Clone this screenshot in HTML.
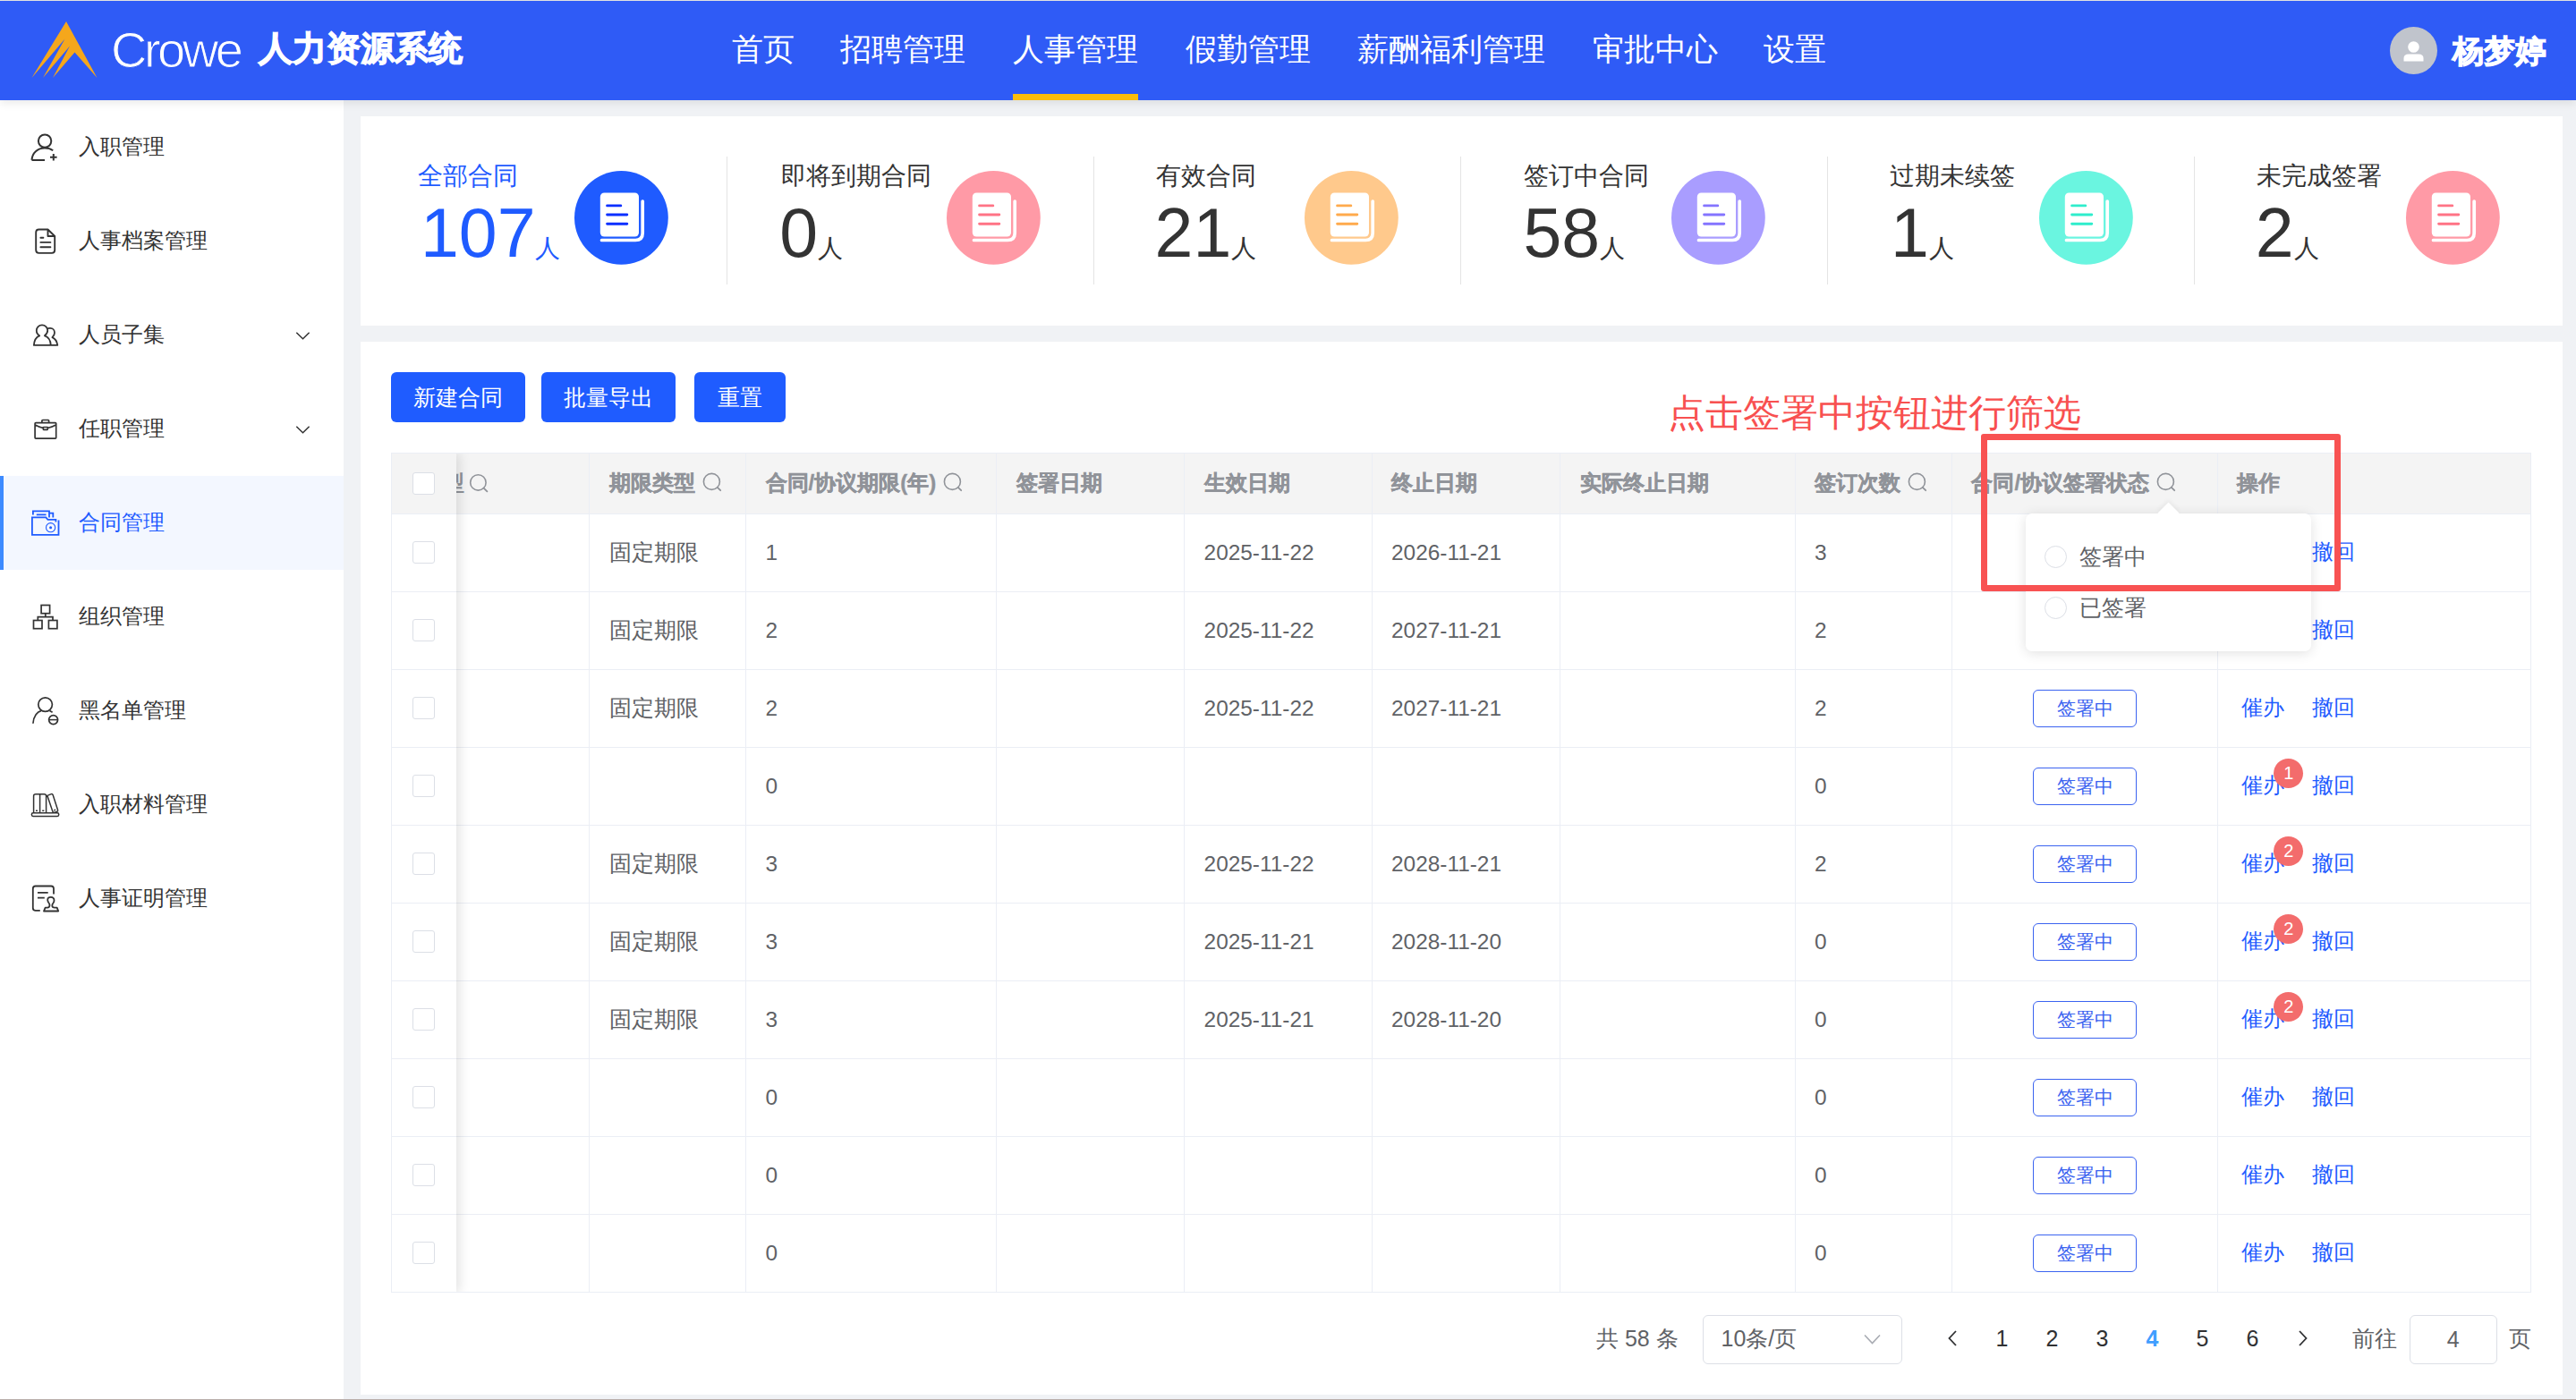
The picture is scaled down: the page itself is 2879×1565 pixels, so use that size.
<!DOCTYPE html>
<html><head><meta charset="utf-8"><title>Crowe 人力资源系统</title>
<style>
*{box-sizing:border-box;margin:0;padding:0}
html,body{width:2879px;height:1565px;overflow:hidden;background:#f0f2f5;font-family:"Liberation Sans",sans-serif;color:#333}
.ab{position:absolute}
.t{position:absolute;white-space:nowrap;line-height:1}
svg{position:absolute;overflow:visible}
</style></head><body>
<div class="ab" style="left:0;top:0;width:2879px;height:1565px;overflow:hidden">

<div class="ab" style="left:0;top:0;width:2879px;height:1px;background:#e6e6e6"></div>
<div class="ab" style="left:0;top:1px;width:2879px;height:111px;background:#2f5bf6;box-shadow:0 3px 10px rgba(0,0,0,.09);z-index:5">
<svg style="left:0;top:-1px" width="120" height="112" viewBox="0 0 120 112"><path d="M74,24 L108.5,87 L83.5,58.5 L59,87 L78,51.5 L48,87 L72.5,43.5 L35.5,87 Z" fill="#f5a71c"/></svg>
<div class="t" style="left:124px;top:27px;font-size:56px;letter-spacing:-3.5px;color:#fff;font-weight:normal;-webkit-text-stroke:1px #2f5bf6">Crowe</div>
<div class="t" style="left:289px;top:34px;font-size:38px;color:#fff;font-weight:bold;-webkit-text-stroke:1.2px #fff">人力资源系统</div>
<div class="t" style="left:818px;top:36px;font-size:35px;color:#fff">首页</div>
<div class="t" style="left:939px;top:36px;font-size:35px;color:#fff">招聘管理</div>
<div class="t" style="left:1132px;top:36px;font-size:35px;color:#fff">人事管理</div>
<div class="t" style="left:1325px;top:36px;font-size:35px;color:#fff">假勤管理</div>
<div class="t" style="left:1517px;top:36px;font-size:35px;color:#fff">薪酬福利管理</div>
<div class="t" style="left:1780px;top:36px;font-size:35px;color:#fff">审批中心</div>
<div class="t" style="left:1971px;top:36px;font-size:35px;color:#fff">设置</div>
<div class="ab" style="left:1132px;top:104px;width:140px;height:7px;background:#fbbd0b"></div>
<div class="ab" style="left:2671px;top:29px;width:53px;height:53px;border-radius:50%;background:#c0c4cc"></div>
<svg style="left:2671px;top:29px" width="53" height="53" viewBox="0 0 53 53"><circle cx="26.5" cy="22.5" r="6.3" fill="#fff"/><path d="M15.5,38.5 L15.5,35 Q15.5,30.5 21,30.5 L32,30.5 Q37.5,30.5 37.5,35 L37.5,38.5 Z" fill="#fff"/></svg>
<div class="t" style="left:2741px;top:38px;font-size:35px;color:#fff;font-weight:bold;-webkit-text-stroke:1px #fff">杨梦婷</div>
</div>
<div class="ab" style="left:0;top:112px;width:384px;height:1453px;background:#fff"></div>
<div class="ab" style="left:0;top:532px;width:384px;height:105px;background:#f3f7ff"></div>
<div class="ab" style="left:0;top:532px;width:4px;height:105px;background:#3d8bff"></div>
<svg style="left:25px;top:135.0px" width="60" height="60" viewBox="0 0 60 60"><circle cx="25.1" cy="22.6" r="7.2" fill="none" stroke="#333333" stroke-width="2"/><path d="M10.5,43.9 C11,36 17,30.5 25,30.5 C29,30.5 32,31.5 34.2,33.2 M10.5,43.9 L25,43.9 M34.8,37 L34.8,44.6 M31,40.8 L38.6,40.8" fill="none" stroke="#333333" stroke-width="2"/></svg>
<div class="t" style="left:88px;top:151.7px;font-size:24.3px;color:#333">入职管理</div>
<svg style="left:25px;top:240.0px" width="60" height="60" viewBox="0 0 60 60"><path d="M28.5,16.5 L18.5,16.5 Q15.2,16.5 15.2,19.8 L15.2,39.6 Q15.2,42.9 18.5,42.9 L32.9,42.9 Q36.2,42.9 36.2,39.6 L36.2,24 Z M28.5,16.5 L28.5,24 L36.2,24 M20.4,25.7 L23.4,25.7 M20.4,30.9 L31.4,30.9 M20.4,36.2 L31.4,36.2" fill="none" stroke="#333333" stroke-width="1.9" stroke-linejoin="round" stroke-linecap="round"/></svg>
<div class="t" style="left:88px;top:256.7px;font-size:24.3px;color:#333">人事档案管理</div>
<svg style="left:25px;top:345.0px" width="60" height="60" viewBox="0 0 60 60"><path d="M19.2,30.3 C16,28.5 15.8,25.5 15.8,24.6 C15.8,21 18.6,18.4 22,18.4 C25.4,18.4 28.2,21 28.2,24.6 C28.2,26.5 27,28.6 24.9,30.3 C29,31.5 31.5,36 31.8,40.9 L12.9,40.9 C13.2,36 15.5,31.7 19.2,30.3 Z M27.8,22.4 C28.8,21.6 30,21.8 31.3,21.8 C34,21.8 36,24 36,26.9 C36,29 34.8,30.8 33.4,32.2 C36.8,33.6 38.7,37 39.3,40.9 L31.8,40.9" fill="none" stroke="#333333" stroke-width="1.8" stroke-linejoin="round"/></svg>
<div class="t" style="left:88px;top:361.7px;font-size:24.3px;color:#333">人员子集</div>
<svg style="left:330px;top:366.5px" width="18" height="14" viewBox="0 0 18 14"><path d="M1.3,4.8 L8.5,11.8 L15.6,4.8" fill="none" stroke="#333" stroke-width="1.5"/></svg>
<svg style="left:25px;top:450.0px" width="60" height="60" viewBox="0 0 60 60"><path d="M15.2,22.6 L36.8,22.6 Q37.7,22.6 37.7,23.5 L37.7,39.2 Q37.7,40.1 36.8,40.1 L15,40.1 Q14.1,40.1 14.1,39.2 L14.1,23.5 Q14.1,22.6 15,22.6 Z M21.9,22.5 L21.9,20.3 Q21.9,19.5 22.7,19.5 L28.8,19.5 Q29.6,19.5 29.6,20.3 L29.6,22.5 M14.3,25 C17,26.5 20,27.8 23.3,28.5 M28.2,28.5 C31.5,27.8 34.8,26.5 37.5,25 M23.8,27.5 L27.8,27.5 Q28.3,27.5 28.3,28 L28.3,29.8 Q28.3,30.4 27.8,30.4 L23.8,30.4 Q23.3,30.4 23.3,29.8 L23.3,28 Q23.3,27.5 23.8,27.5 Z" fill="none" stroke="#333333" stroke-width="1.7" stroke-linejoin="round"/></svg>
<div class="t" style="left:88px;top:466.7px;font-size:24.3px;color:#333">任职管理</div>
<svg style="left:330px;top:471.5px" width="18" height="14" viewBox="0 0 18 14"><path d="M1.3,4.8 L8.5,11.8 L15.6,4.8" fill="none" stroke="#333" stroke-width="1.5"/></svg>
<svg style="left:25px;top:555.0px" width="60" height="60" viewBox="0 0 60 60"><path d="M11.9,20.5 L11.9,16.4 L30,16.4 L30,23.4 M30,18.6 L34.3,18.6 L34.3,23.4 M15.8,20.3 L26.5,20.3 M37.4,28.6 L37.4,25.9 L28.5,25.9 L26.3,23.4 L10.9,23.4 L10.9,42.9 L40.5,42.9 L40.5,26.5" fill="none" stroke="#1f5cff" stroke-width="1.8"/><circle cx="31.6" cy="34.7" r="5.1" fill="none" stroke="#1f5cff" stroke-width="1.1"/><circle cx="31.6" cy="34.7" r="1.5" fill="#1f5cff"/></svg>
<div class="t" style="left:88px;top:571.7px;font-size:24.3px;color:#1f5cff">合同管理</div>
<svg style="left:25px;top:660.0px" width="60" height="60" viewBox="0 0 60 60"><rect x="21.1" y="16.5" width="9.5" height="9.2" fill="none" stroke="#333333" stroke-width="1.7"/><rect x="12.5" y="33.5" width="9.5" height="9.2" fill="none" stroke="#333333" stroke-width="1.7"/><rect x="29.4" y="33.5" width="9.5" height="9.2" fill="none" stroke="#333333" stroke-width="1.7"/><path d="M25.8,25.7 L25.8,29.6 M17.3,33.5 L17.3,29.6 L34,29.6 L34,33.5" fill="none" stroke="#333333" stroke-width="1.7"/></svg>
<div class="t" style="left:88px;top:676.7px;font-size:24.3px;color:#333">组织管理</div>
<svg style="left:25px;top:765.0px" width="60" height="60" viewBox="0 0 60 60"><circle cx="25.6" cy="22.6" r="7.8" fill="none" stroke="#333333" stroke-width="1.7"/><path d="M11.9,43.8 C12.5,35 17,30.5 21,29.6 M30.5,29.5 L33.6,31.3" fill="none" stroke="#333333" stroke-width="1.7"/><circle cx="34.6" cy="39.6" r="5" fill="none" stroke="#333333" stroke-width="1.7"/><path d="M30,39.6 L39.2,39.6" stroke="#333333" stroke-width="1.5"/></svg>
<div class="t" style="left:88px;top:781.7px;font-size:24.3px;color:#333">黑名单管理</div>
<svg style="left:25px;top:870.0px" width="60" height="60" viewBox="0 0 60 60"><rect x="10.4" y="38.7" width="30.3" height="3.7" rx="1.6" fill="none" stroke="#333333" stroke-width="1.5"/><path d="M12.6,38.7 L12.6,19.8 Q12.6,17.7 15,17.7 L24.3,17.7 Q26.6,17.7 26.6,19.8 L26.6,38.7 M19.6,17.7 L19.6,38.7 M27.9,19.4 L32.3,17.6 Q33.6,17.2 34.1,18.6 L39.6,35.4 Q40,37 38.4,37.5 L35.8,38.3 Q34.4,38.6 33.9,37.2 Z M15,36.3 L17,36.3 M22.2,36.3 L24.3,36.3 M35.2,35.9 L37.2,35.3" fill="none" stroke="#333333" stroke-width="1.5" stroke-linejoin="round"/></svg>
<div class="t" style="left:88px;top:886.7px;font-size:24.3px;color:#333">入职材料管理</div>
<svg style="left:25px;top:975.0px" width="60" height="60" viewBox="0 0 60 60"><path d="M19.8,42.9 L14.7,42.9 Q11.8,42.9 11.8,40 L11.8,18.5 Q11.8,15.5 14.7,15.5 L32.1,15.5 Q35,15.5 35,18.5 L35,24.5 M17,22.8 L28.7,22.8 M17,28.6 L24.8,28.6 M24,43.5 L25.6,39.6 L28,39.6 Q30.5,39.6 30.5,36.8 Q30.5,35.5 29,33.5 Q28.2,32 28.2,31 Q28.2,27.9 31.8,27.9 Q35.5,27.9 35.5,31.5 Q35.5,33 34.6,34.3 Q33.3,36 33.3,37.2 Q33.3,39.6 36.3,39.6 L38.7,39.6 L40.2,43.5 Z" fill="none" stroke="#333333" stroke-width="1.8" stroke-linejoin="round"/></svg>
<div class="t" style="left:88px;top:991.7px;font-size:24.3px;color:#333">人事证明管理</div>
<div class="ab" style="left:403px;top:130px;width:2461px;height:234px;background:#fff"></div>
<div class="t" style="left:467px;top:183px;font-size:27.5px;color:#1f5bff">全部合同</div>
<div class="t" style="left:470px;top:222px;font-size:77px;color:#1f5bff"><span>107</span><span style="font-size:27.5px;margin-left:0px">人</span></div>
<svg style="left:642.0px;top:191px" width="105" height="105" viewBox="0 0 105 105"><circle cx="52.4" cy="52.4" r="52.4" fill="#1f5bff"/><rect x="28.8" y="24.5" width="43.2" height="49" rx="4.5" fill="#fff"/><path d="M36.6,38.9 L51.8,38.9 M36.6,49 L58.8,49 M36.6,59.3 L58.8,59.3" stroke="#0b2fff" stroke-width="2.9" stroke-linecap="round"/><path d="M76.2,34 L76.2,69.5 Q76.2,77.5 68.2,77.5 L30.5,77.5" fill="none" stroke="#fff" stroke-width="3.7" stroke-linecap="round"/></svg>
<div class="t" style="left:872.6px;top:183px;font-size:27.5px;color:#333">即将到期合同</div>
<div class="t" style="left:871.3px;top:222px;font-size:77px;color:#333"><span>0</span><span style="font-size:27.5px;margin-left:0px">人</span></div>
<svg style="left:1058.2px;top:191px" width="105" height="105" viewBox="0 0 105 105"><circle cx="52.4" cy="52.4" r="52.4" fill="#ff9aa6"/><rect x="28.8" y="24.5" width="43.2" height="49" rx="4.5" fill="#fff"/><path d="M36.6,38.9 L51.8,38.9 M36.6,49 L58.8,49 M36.6,59.3 L58.8,59.3" stroke="#ff7385" stroke-width="2.9" stroke-linecap="round"/><path d="M76.2,34 L76.2,69.5 Q76.2,77.5 68.2,77.5 L30.5,77.5" fill="none" stroke="#fff" stroke-width="3.7" stroke-linecap="round"/></svg>
<div class="t" style="left:1292px;top:183px;font-size:27.5px;color:#333">有效合同</div>
<div class="t" style="left:1290.6px;top:222px;font-size:77px;color:#333"><span>21</span><span style="font-size:27.5px;margin-left:0px">人</span></div>
<svg style="left:1458.3px;top:191px" width="105" height="105" viewBox="0 0 105 105"><circle cx="52.4" cy="52.4" r="52.4" fill="#ffc98c"/><rect x="28.8" y="24.5" width="43.2" height="49" rx="4.5" fill="#fff"/><path d="M36.6,38.9 L51.8,38.9 M36.6,49 L58.8,49 M36.6,59.3 L58.8,59.3" stroke="#ffaa4c" stroke-width="2.9" stroke-linecap="round"/><path d="M76.2,34 L76.2,69.5 Q76.2,77.5 68.2,77.5 L30.5,77.5" fill="none" stroke="#fff" stroke-width="3.7" stroke-linecap="round"/></svg>
<div class="t" style="left:1702.8px;top:183px;font-size:27.5px;color:#333">签订中合同</div>
<div class="t" style="left:1702.4px;top:222px;font-size:77px;color:#333"><span>58</span><span style="font-size:27.5px;margin-left:0px">人</span></div>
<svg style="left:1868.2px;top:191px" width="105" height="105" viewBox="0 0 105 105"><circle cx="52.4" cy="52.4" r="52.4" fill="#a99dff"/><rect x="28.8" y="24.5" width="43.2" height="49" rx="4.5" fill="#fff"/><path d="M36.6,38.9 L51.8,38.9 M36.6,49 L58.8,49 M36.6,59.3 L58.8,59.3" stroke="#8474ff" stroke-width="2.9" stroke-linecap="round"/><path d="M76.2,34 L76.2,69.5 Q76.2,77.5 68.2,77.5 L30.5,77.5" fill="none" stroke="#fff" stroke-width="3.7" stroke-linecap="round"/></svg>
<div class="t" style="left:2112.4px;top:183px;font-size:27.5px;color:#333">过期未续签</div>
<div class="t" style="left:2113px;top:222px;font-size:77px;color:#333"><span>1</span><span style="font-size:27.5px;margin-left:0px">人</span></div>
<svg style="left:2279.2px;top:191px" width="105" height="105" viewBox="0 0 105 105"><circle cx="52.4" cy="52.4" r="52.4" fill="#6af5e0"/><rect x="28.8" y="24.5" width="43.2" height="49" rx="4.5" fill="#fff"/><path d="M36.6,38.9 L51.8,38.9 M36.6,49 L58.8,49 M36.6,59.3 L58.8,59.3" stroke="#2eedcc" stroke-width="2.9" stroke-linecap="round"/><path d="M76.2,34 L76.2,69.5 Q76.2,77.5 68.2,77.5 L30.5,77.5" fill="none" stroke="#fff" stroke-width="3.7" stroke-linecap="round"/></svg>
<div class="t" style="left:2522px;top:183px;font-size:27.5px;color:#333">未完成签署</div>
<div class="t" style="left:2520.7px;top:222px;font-size:77px;color:#333"><span>2</span><span style="font-size:27.5px;margin-left:0px">人</span></div>
<svg style="left:2688.6px;top:191px" width="105" height="105" viewBox="0 0 105 105"><circle cx="52.4" cy="52.4" r="52.4" fill="#ff9aa6"/><rect x="28.8" y="24.5" width="43.2" height="49" rx="4.5" fill="#fff"/><path d="M36.6,38.9 L51.8,38.9 M36.6,49 L58.8,49 M36.6,59.3 L58.8,59.3" stroke="#ff7385" stroke-width="2.9" stroke-linecap="round"/><path d="M76.2,34 L76.2,69.5 Q76.2,77.5 68.2,77.5 L30.5,77.5" fill="none" stroke="#fff" stroke-width="3.7" stroke-linecap="round"/></svg>
<div class="ab" style="left:812px;top:175px;width:1px;height:143px;background:#e4e4e4"></div>
<div class="ab" style="left:1222px;top:175px;width:1px;height:143px;background:#e4e4e4"></div>
<div class="ab" style="left:1632px;top:175px;width:1px;height:143px;background:#e4e4e4"></div>
<div class="ab" style="left:2042px;top:175px;width:1px;height:143px;background:#e4e4e4"></div>
<div class="ab" style="left:2452px;top:175px;width:1px;height:143px;background:#e4e4e4"></div>
<div class="ab" style="left:403px;top:382px;width:2461px;height:1177px;background:#fff"></div>
<div class="ab" style="left:437px;top:416px;width:150px;height:56px;border-radius:6px;background:#1f5cff;color:#fff;font-size:25px;line-height:56px;text-align:center">新建合同</div>
<div class="ab" style="left:605px;top:416px;width:150px;height:56px;border-radius:6px;background:#1f5cff;color:#fff;font-size:25px;line-height:56px;text-align:center">批量导出</div>
<div class="ab" style="left:776px;top:416px;width:102px;height:56px;border-radius:6px;background:#1f5cff;color:#fff;font-size:25px;line-height:56px;text-align:center">重置</div>
<div class="t" style="left:1863.5px;top:441px;font-size:42.2px;color:#f85050">点击签署中按钮进行筛选</div>
<div class="ab" style="left:437px;top:506px;width:2392px;height:939px;border:1px solid #ebeef5;background:#fff;overflow:hidden">
<div class="ab" style="left:0;top:0;width:2391px;height:67px;background:#f4f4f4"></div>
<div class="ab" style="left:0;top:67px;width:2391px;height:1px;background:#ebeef5"></div>
<div class="ab" style="left:0;top:154px;width:2391px;height:1px;background:#ebeef5"></div>
<div class="ab" style="left:0;top:241px;width:2391px;height:1px;background:#ebeef5"></div>
<div class="ab" style="left:0;top:328px;width:2391px;height:1px;background:#ebeef5"></div>
<div class="ab" style="left:0;top:415px;width:2391px;height:1px;background:#ebeef5"></div>
<div class="ab" style="left:0;top:502px;width:2391px;height:1px;background:#ebeef5"></div>
<div class="ab" style="left:0;top:589px;width:2391px;height:1px;background:#ebeef5"></div>
<div class="ab" style="left:0;top:676px;width:2391px;height:1px;background:#ebeef5"></div>
<div class="ab" style="left:0;top:763px;width:2391px;height:1px;background:#ebeef5"></div>
<div class="ab" style="left:0;top:850px;width:2391px;height:1px;background:#ebeef5"></div>
<div class="ab" style="left:220px;top:0;width:1px;height:938px;background:#ebeef5"></div>
<div class="ab" style="left:395px;top:0;width:1px;height:938px;background:#ebeef5"></div>
<div class="ab" style="left:675px;top:0;width:1px;height:938px;background:#ebeef5"></div>
<div class="ab" style="left:885px;top:0;width:1px;height:938px;background:#ebeef5"></div>
<div class="ab" style="left:1095px;top:0;width:1px;height:938px;background:#ebeef5"></div>
<div class="ab" style="left:1305px;top:0;width:1px;height:938px;background:#ebeef5"></div>
<div class="ab" style="left:1568px;top:0;width:1px;height:938px;background:#ebeef5"></div>
<div class="ab" style="left:1743px;top:0;width:1px;height:938px;background:#ebeef5"></div>
<div class="ab" style="left:2040px;top:0;width:1px;height:938px;background:#ebeef5"></div>
<div class="t hd" style="left:243.0px;top:21px;font-size:24px;font-weight:bold;color:#909399;-webkit-text-stroke:0.4px #909399"><span>期限类型</span><svg class="il" width="24" height="24" viewBox="0 0 24 24" style="position:relative;display:inline-block;vertical-align:top;margin-left:8px;top:0px"><circle cx="10.4" cy="10.4" r="9" fill="none" stroke="#909399" stroke-width="1.6"/><path d="M16.8,16.8 L20.2,20.2" stroke="#909399" stroke-width="1.8" stroke-linecap="round"/></svg></div>
<div class="t hd" style="left:417.6px;top:21px;font-size:24px;font-weight:bold;color:#909399;-webkit-text-stroke:0.4px #909399"><span>合同/协议期限(年)</span><svg class="il" width="24" height="24" viewBox="0 0 24 24" style="position:relative;display:inline-block;vertical-align:top;margin-left:8px;top:0px"><circle cx="10.4" cy="10.4" r="9" fill="none" stroke="#909399" stroke-width="1.6"/><path d="M16.8,16.8 L20.2,20.2" stroke="#909399" stroke-width="1.8" stroke-linecap="round"/></svg></div>
<div class="t hd" style="left:698.0px;top:21px;font-size:24px;font-weight:bold;color:#909399;-webkit-text-stroke:0.4px #909399"><span>签署日期</span></div>
<div class="t hd" style="left:907.6px;top:21px;font-size:24px;font-weight:bold;color:#909399;-webkit-text-stroke:0.4px #909399"><span>生效日期</span></div>
<div class="t hd" style="left:1117.0px;top:21px;font-size:24px;font-weight:bold;color:#909399;-webkit-text-stroke:0.4px #909399"><span>终止日期</span></div>
<div class="t hd" style="left:1327.6px;top:21px;font-size:24px;font-weight:bold;color:#909399;-webkit-text-stroke:0.4px #909399"><span>实际终止日期</span></div>
<div class="t hd" style="left:1590.0px;top:21px;font-size:24px;font-weight:bold;color:#909399;-webkit-text-stroke:0.4px #909399"><span>签订次数</span><svg class="il" width="24" height="24" viewBox="0 0 24 24" style="position:relative;display:inline-block;vertical-align:top;margin-left:8px;top:0px"><circle cx="10.4" cy="10.4" r="9" fill="none" stroke="#909399" stroke-width="1.6"/><path d="M16.8,16.8 L20.2,20.2" stroke="#909399" stroke-width="1.8" stroke-linecap="round"/></svg></div>
<div class="t hd" style="left:1765.4px;top:21px;font-size:24px;font-weight:bold;color:#909399;-webkit-text-stroke:0.4px #909399"><span>合同/协议签署状态</span><svg class="il" width="24" height="24" viewBox="0 0 24 24" style="position:relative;display:inline-block;vertical-align:top;margin-left:8px;top:0px"><circle cx="10.4" cy="10.4" r="9" fill="none" stroke="#909399" stroke-width="1.6"/><path d="M16.8,16.8 L20.2,20.2" stroke="#909399" stroke-width="1.8" stroke-linecap="round"/></svg></div>
<div class="t hd" style="left:2062.0px;top:21px;font-size:24px;font-weight:bold;color:#909399;-webkit-text-stroke:0.4px #909399"><span>操作</span></div>
<div class="ab" style="left:72px;top:0;width:20px;height:68px;overflow:hidden"><div class="t" style="left:-15px;top:21px;font-size:24px;font-weight:bold;color:#909399">型</div></div>
<svg style="left:87.0px;top:22.0px" width="24" height="24" viewBox="0 0 24 24"><circle cx="9.4" cy="10.4" r="8.7" fill="none" stroke="#909399" stroke-width="1.6"/><path d="M15.6,16.6 L19.4,20.4" stroke="#909399" stroke-width="1.8" stroke-linecap="round"/></svg>
<div class="t" style="left:242.5px;top:98.0px;font-size:25px;color:#606266">固定期限</div>
<div class="t" style="left:417.6px;top:98.5px;font-size:24.4px;color:#606266">1</div>
<div class="t" style="left:907.6px;top:98.5px;font-size:24.4px;color:#606266">2025-11-22</div>
<div class="t" style="left:1117.0px;top:98.5px;font-size:24.4px;color:#606266">2026-11-21</div>
<div class="t" style="left:1590.0px;top:98.5px;font-size:24.4px;color:#606266">3</div>
<div class="ab" style="left:1834px;top:89.5px;width:116px;height:42px;border:1.5px solid #3b63f0;border-radius:6px;color:#3b63f0;font-size:20.5px;line-height:39px;text-align:center">签署中</div>
<div class="t" style="left:2067px;top:98.0px;font-size:24px;color:#1f5cff">催办</div>
<div class="t" style="left:2146px;top:98.0px;font-size:24px;color:#1f5cff">撤回</div>
<div class="t" style="left:242.5px;top:185.0px;font-size:25px;color:#606266">固定期限</div>
<div class="t" style="left:417.6px;top:185.5px;font-size:24.4px;color:#606266">2</div>
<div class="t" style="left:907.6px;top:185.5px;font-size:24.4px;color:#606266">2025-11-22</div>
<div class="t" style="left:1117.0px;top:185.5px;font-size:24.4px;color:#606266">2027-11-21</div>
<div class="t" style="left:1590.0px;top:185.5px;font-size:24.4px;color:#606266">2</div>
<div class="ab" style="left:1834px;top:176.5px;width:116px;height:42px;border:1.5px solid #3b63f0;border-radius:6px;color:#3b63f0;font-size:20.5px;line-height:39px;text-align:center">签署中</div>
<div class="t" style="left:2067px;top:185.0px;font-size:24px;color:#1f5cff">催办</div>
<div class="t" style="left:2146px;top:185.0px;font-size:24px;color:#1f5cff">撤回</div>
<div class="t" style="left:242.5px;top:272.0px;font-size:25px;color:#606266">固定期限</div>
<div class="t" style="left:417.6px;top:272.5px;font-size:24.4px;color:#606266">2</div>
<div class="t" style="left:907.6px;top:272.5px;font-size:24.4px;color:#606266">2025-11-22</div>
<div class="t" style="left:1117.0px;top:272.5px;font-size:24.4px;color:#606266">2027-11-21</div>
<div class="t" style="left:1590.0px;top:272.5px;font-size:24.4px;color:#606266">2</div>
<div class="ab" style="left:1834px;top:263.5px;width:116px;height:42px;border:1.5px solid #3b63f0;border-radius:6px;color:#3b63f0;font-size:20.5px;line-height:39px;text-align:center">签署中</div>
<div class="t" style="left:2067px;top:272.0px;font-size:24px;color:#1f5cff">催办</div>
<div class="t" style="left:2146px;top:272.0px;font-size:24px;color:#1f5cff">撤回</div>
<div class="t" style="left:417.6px;top:359.5px;font-size:24.4px;color:#606266">0</div>
<div class="t" style="left:1590.0px;top:359.5px;font-size:24.4px;color:#606266">0</div>
<div class="ab" style="left:1834px;top:350.5px;width:116px;height:42px;border:1.5px solid #3b63f0;border-radius:6px;color:#3b63f0;font-size:20.5px;line-height:39px;text-align:center">签署中</div>
<div class="t" style="left:2067px;top:359.0px;font-size:24px;color:#1f5cff">催办</div>
<div class="t" style="left:2146px;top:359.0px;font-size:24px;color:#1f5cff">撤回</div>
<div class="ab" style="left:2103.2px;top:341.0px;width:33px;height:33px;border-radius:50%;background:#f36c6c;color:#fff;font-size:20px;line-height:33px;text-align:center">1</div>
<div class="t" style="left:242.5px;top:446.0px;font-size:25px;color:#606266">固定期限</div>
<div class="t" style="left:417.6px;top:446.5px;font-size:24.4px;color:#606266">3</div>
<div class="t" style="left:907.6px;top:446.5px;font-size:24.4px;color:#606266">2025-11-22</div>
<div class="t" style="left:1117.0px;top:446.5px;font-size:24.4px;color:#606266">2028-11-21</div>
<div class="t" style="left:1590.0px;top:446.5px;font-size:24.4px;color:#606266">2</div>
<div class="ab" style="left:1834px;top:437.5px;width:116px;height:42px;border:1.5px solid #3b63f0;border-radius:6px;color:#3b63f0;font-size:20.5px;line-height:39px;text-align:center">签署中</div>
<div class="t" style="left:2067px;top:446.0px;font-size:24px;color:#1f5cff">催办</div>
<div class="t" style="left:2146px;top:446.0px;font-size:24px;color:#1f5cff">撤回</div>
<div class="ab" style="left:2103.2px;top:428.0px;width:33px;height:33px;border-radius:50%;background:#f36c6c;color:#fff;font-size:20px;line-height:33px;text-align:center">2</div>
<div class="t" style="left:242.5px;top:533.0px;font-size:25px;color:#606266">固定期限</div>
<div class="t" style="left:417.6px;top:533.5px;font-size:24.4px;color:#606266">3</div>
<div class="t" style="left:907.6px;top:533.5px;font-size:24.4px;color:#606266">2025-11-21</div>
<div class="t" style="left:1117.0px;top:533.5px;font-size:24.4px;color:#606266">2028-11-20</div>
<div class="t" style="left:1590.0px;top:533.5px;font-size:24.4px;color:#606266">0</div>
<div class="ab" style="left:1834px;top:524.5px;width:116px;height:42px;border:1.5px solid #3b63f0;border-radius:6px;color:#3b63f0;font-size:20.5px;line-height:39px;text-align:center">签署中</div>
<div class="t" style="left:2067px;top:533.0px;font-size:24px;color:#1f5cff">催办</div>
<div class="t" style="left:2146px;top:533.0px;font-size:24px;color:#1f5cff">撤回</div>
<div class="ab" style="left:2103.2px;top:515.0px;width:33px;height:33px;border-radius:50%;background:#f36c6c;color:#fff;font-size:20px;line-height:33px;text-align:center">2</div>
<div class="t" style="left:242.5px;top:620.0px;font-size:25px;color:#606266">固定期限</div>
<div class="t" style="left:417.6px;top:620.5px;font-size:24.4px;color:#606266">3</div>
<div class="t" style="left:907.6px;top:620.5px;font-size:24.4px;color:#606266">2025-11-21</div>
<div class="t" style="left:1117.0px;top:620.5px;font-size:24.4px;color:#606266">2028-11-20</div>
<div class="t" style="left:1590.0px;top:620.5px;font-size:24.4px;color:#606266">0</div>
<div class="ab" style="left:1834px;top:611.5px;width:116px;height:42px;border:1.5px solid #3b63f0;border-radius:6px;color:#3b63f0;font-size:20.5px;line-height:39px;text-align:center">签署中</div>
<div class="t" style="left:2067px;top:620.0px;font-size:24px;color:#1f5cff">催办</div>
<div class="t" style="left:2146px;top:620.0px;font-size:24px;color:#1f5cff">撤回</div>
<div class="ab" style="left:2103.2px;top:602.0px;width:33px;height:33px;border-radius:50%;background:#f36c6c;color:#fff;font-size:20px;line-height:33px;text-align:center">2</div>
<div class="t" style="left:417.6px;top:707.5px;font-size:24.4px;color:#606266">0</div>
<div class="t" style="left:1590.0px;top:707.5px;font-size:24.4px;color:#606266">0</div>
<div class="ab" style="left:1834px;top:698.5px;width:116px;height:42px;border:1.5px solid #3b63f0;border-radius:6px;color:#3b63f0;font-size:20.5px;line-height:39px;text-align:center">签署中</div>
<div class="t" style="left:2067px;top:707.0px;font-size:24px;color:#1f5cff">催办</div>
<div class="t" style="left:2146px;top:707.0px;font-size:24px;color:#1f5cff">撤回</div>
<div class="t" style="left:417.6px;top:794.5px;font-size:24.4px;color:#606266">0</div>
<div class="t" style="left:1590.0px;top:794.5px;font-size:24.4px;color:#606266">0</div>
<div class="ab" style="left:1834px;top:785.5px;width:116px;height:42px;border:1.5px solid #3b63f0;border-radius:6px;color:#3b63f0;font-size:20.5px;line-height:39px;text-align:center">签署中</div>
<div class="t" style="left:2067px;top:794.0px;font-size:24px;color:#1f5cff">催办</div>
<div class="t" style="left:2146px;top:794.0px;font-size:24px;color:#1f5cff">撤回</div>
<div class="t" style="left:417.6px;top:881.5px;font-size:24.4px;color:#606266">0</div>
<div class="t" style="left:1590.0px;top:881.5px;font-size:24.4px;color:#606266">0</div>
<div class="ab" style="left:1834px;top:872.5px;width:116px;height:42px;border:1.5px solid #3b63f0;border-radius:6px;color:#3b63f0;font-size:20.5px;line-height:39px;text-align:center">签署中</div>
<div class="t" style="left:2067px;top:881.0px;font-size:24px;color:#1f5cff">催办</div>
<div class="t" style="left:2146px;top:881.0px;font-size:24px;color:#1f5cff">撤回</div>
<div class="ab" style="left:0;top:0;width:72px;height:938px;background:#fff;box-shadow:4px 0 12px rgba(0,0,0,.11)">
<div class="ab" style="left:0;top:0;width:100%;height:67px;background:#f4f4f4"></div>
<div class="ab" style="left:0;top:67px;width:100%;height:1px;background:#ebeef5"></div>
<div class="ab" style="left:0;top:154px;width:100%;height:1px;background:#ebeef5"></div>
<div class="ab" style="left:0;top:241px;width:100%;height:1px;background:#ebeef5"></div>
<div class="ab" style="left:0;top:328px;width:100%;height:1px;background:#ebeef5"></div>
<div class="ab" style="left:0;top:415px;width:100%;height:1px;background:#ebeef5"></div>
<div class="ab" style="left:0;top:502px;width:100%;height:1px;background:#ebeef5"></div>
<div class="ab" style="left:0;top:589px;width:100%;height:1px;background:#ebeef5"></div>
<div class="ab" style="left:0;top:676px;width:100%;height:1px;background:#ebeef5"></div>
<div class="ab" style="left:0;top:763px;width:100%;height:1px;background:#ebeef5"></div>
<div class="ab" style="left:0;top:850px;width:100%;height:1px;background:#ebeef5"></div>
<div class="ab" style="left:23px;top:20.5px;width:25px;height:25px;border:1px solid #dcdfe6;border-radius:3px;background:#fff"></div>
<div class="ab" style="left:23px;top:98.0px;width:25px;height:25px;border:1px solid #dcdfe6;border-radius:3px;background:#fff"></div>
<div class="ab" style="left:23px;top:185.0px;width:25px;height:25px;border:1px solid #dcdfe6;border-radius:3px;background:#fff"></div>
<div class="ab" style="left:23px;top:272.0px;width:25px;height:25px;border:1px solid #dcdfe6;border-radius:3px;background:#fff"></div>
<div class="ab" style="left:23px;top:359.0px;width:25px;height:25px;border:1px solid #dcdfe6;border-radius:3px;background:#fff"></div>
<div class="ab" style="left:23px;top:446.0px;width:25px;height:25px;border:1px solid #dcdfe6;border-radius:3px;background:#fff"></div>
<div class="ab" style="left:23px;top:533.0px;width:25px;height:25px;border:1px solid #dcdfe6;border-radius:3px;background:#fff"></div>
<div class="ab" style="left:23px;top:620.0px;width:25px;height:25px;border:1px solid #dcdfe6;border-radius:3px;background:#fff"></div>
<div class="ab" style="left:23px;top:707.0px;width:25px;height:25px;border:1px solid #dcdfe6;border-radius:3px;background:#fff"></div>
<div class="ab" style="left:23px;top:794.0px;width:25px;height:25px;border:1px solid #dcdfe6;border-radius:3px;background:#fff"></div>
<div class="ab" style="left:23px;top:881.0px;width:25px;height:25px;border:1px solid #dcdfe6;border-radius:3px;background:#fff"></div>
</div>
</div>
<div class="ab" style="left:2264px;top:574px;width:319px;height:154px;background:#fff;border-radius:7px;box-shadow:0 2px 14px rgba(0,0,0,.12);z-index:8"></div>
<div class="ab" style="left:2414.5px;top:565px;width:17px;height:17px;background:#fff;transform:rotate(45deg);box-shadow:-2px -2px 5px rgba(0,0,0,.05);z-index:8"></div>
<div class="ab" style="left:2402px;top:574px;width:42px;height:14px;background:#fff;z-index:9"></div>
<div class="ab" style="left:2284.5px;top:609.9px;width:25px;height:25px;border:1px solid #dcdfe6;border-radius:50%;background:#fff;z-index:9"></div>
<div class="t" style="left:2324px;top:609.9px;font-size:25px;color:#606266;z-index:9">签署中</div>
<div class="ab" style="left:2284.5px;top:666.5px;width:25px;height:25px;border:1px solid #dcdfe6;border-radius:50%;background:#fff;z-index:9"></div>
<div class="t" style="left:2324px;top:666.5px;font-size:25px;color:#606266;z-index:9">已签署</div>
<div class="ab" style="left:2214px;top:485px;width:402px;height:176px;border:7px solid #f85252;border-radius:3px;z-index:10"></div>
<div class="t" style="left:1784px;top:1483.5px;font-size:25px;color:#606266">共 58 条</div>
<div class="ab" style="left:1902.5px;top:1469.5px;width:223px;height:55px;border:1.5px solid #dcdfe6;border-radius:6px"></div>
<div class="t" style="left:1923.5px;top:1483.5px;font-size:25px;color:#606266">10条/页</div>
<svg style="left:2083px;top:1490px" width="20" height="14" viewBox="0 0 20 14"><path d="M1,2.5 L9.5,11.5 L18,2.5" fill="none" stroke="#a8abb2" stroke-width="1.6"/></svg>
<svg style="left:2175px;top:1486px" width="14" height="20" viewBox="0 0 14 20"><path d="M11,2 L3.5,10 L11,18" fill="none" stroke="#303133" stroke-width="1.8"/></svg>
<svg style="left:2567px;top:1486px" width="14" height="20" viewBox="0 0 14 20"><path d="M3,2 L10.5,10 L3,18" fill="none" stroke="#303133" stroke-width="1.8"/></svg>
<div class="t" style="left:2197.5px;top:1483.5px;width:80px;text-align:center;font-size:25px;color:#303133;font-weight:normal">1</div>
<div class="t" style="left:2253.5px;top:1483.5px;width:80px;text-align:center;font-size:25px;color:#303133;font-weight:normal">2</div>
<div class="t" style="left:2309.5px;top:1483.5px;width:80px;text-align:center;font-size:25px;color:#303133;font-weight:normal">3</div>
<div class="t" style="left:2365.5px;top:1483.5px;width:80px;text-align:center;font-size:25px;color:#409eff;font-weight:bold">4</div>
<div class="t" style="left:2421.5px;top:1483.5px;width:80px;text-align:center;font-size:25px;color:#303133;font-weight:normal">5</div>
<div class="t" style="left:2477.5px;top:1483.5px;width:80px;text-align:center;font-size:25px;color:#303133;font-weight:normal">6</div>
<div class="t" style="left:2628.5px;top:1483.5px;font-size:25px;color:#606266">前往</div>
<div class="ab" style="left:2693px;top:1469.5px;width:97.5px;height:55px;border:1.5px solid #dcdfe6;border-radius:6px;text-align:center;font-size:25px;line-height:52px;color:#606266">4</div>
<div class="t" style="left:2804px;top:1483.5px;font-size:25px;color:#606266">页</div>
<div class="ab" style="left:0;top:1564px;width:2879px;height:1px;background:#b9aeaa;z-index:20"></div>
</div></body></html>
